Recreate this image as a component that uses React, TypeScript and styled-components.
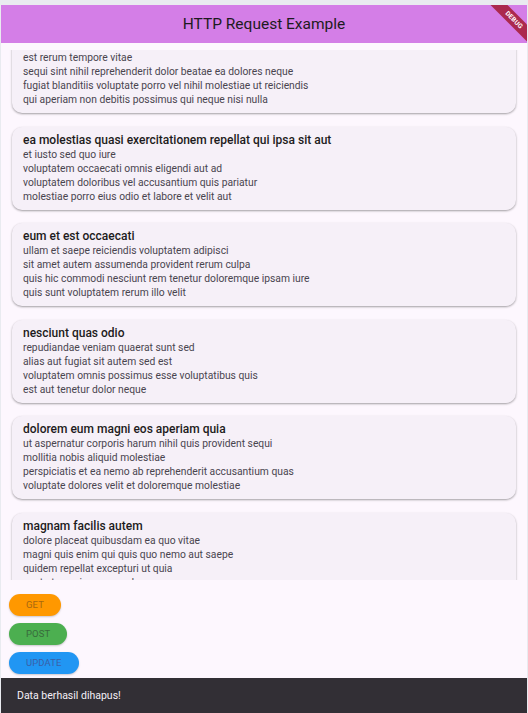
import { useEffect, useRef } from "react";
import styled, { createGlobalStyle } from "styled-components";

const GlobalStyle = createGlobalStyle`
  html, body {
    margin: 0;
    padding: 0;
    height: 100%;
    background: #e9ebf0;
  }
  #root {
    height: 100%;
  }
  * {
    box-sizing: border-box;
  }
`;

const Frame = styled.div`
  height: 100%;
  padding: 5px 1px 0 1px;
  display: flex;
  flex-direction: column;
  font-family: Roboto, "Noto Sans", sans-serif;
`;

const Screen = styled.div`
  flex: 1;
  min-height: 0;
  display: flex;
  flex-direction: column;
  background: #fdf7fe;
  overflow: hidden;
`;

const AppBar = styled.header`
  position: relative;
  height: 38px;
  flex-shrink: 0;
  background: #d47ee7;
  display: flex;
  align-items: center;
  justify-content: center;
  overflow: hidden;
  h1 {
    margin: 0;
    font-size: 15.5px;
    font-weight: 400;
    color: #1d1b20;
  }
`;

const DebugBanner = styled.div`
  position: absolute;
  top: 9px;
  right: -22px;
  width: 70px;
  height: 12px;
  background: rgba(160, 20, 40, 0.8);
  transform: rotate(45deg);
  color: #fff;
  font-size: 6.5px;
  font-weight: 700;
  letter-spacing: 0.2px;
  text-align: center;
  line-height: 12px;
`;

const ListArea = styled.div`
  flex: 1;
  min-height: 0;
  display: flex;
  flex-direction: column;
  padding-top: 7px;
`;

const PostList = styled.ul`
  flex: 1;
  min-height: 0;
  margin: 0;
  padding: 0 11px;
  list-style: none;
  overflow-y: auto;
  scrollbar-width: none;
  &::-webkit-scrollbar {
    display: none;
  }
  li {
    margin: 7px 0 13.5px;
    padding: 5px 12px 6px 11px;
    background: #f6f0f8;
    border-radius: 10px;
    box-shadow: 0 1px 2px rgba(0, 0, 0, 0.28), 0 1px 3px rgba(0, 0, 0, 0.1);
  }
`;

const PostTitle = styled.div`
  font-size: 12px;
  font-weight: 500;
  line-height: 16px;
  color: #1d1b20;
`;

const PostBody = styled.div`
  font-size: 10.3px;
  line-height: 14px;
  color: #49454f;
  white-space: pre-line;
`;

const Actions = styled.div`
  flex-shrink: 0;
  display: flex;
  flex-direction: column;
  align-items: flex-start;
  gap: 7px;
  padding: 14px 8px 4px;
`;

const ActionButton = styled.button<{ $bg: string; $fg: string }>`
  height: 22px;
  padding: 0 17px;
  border: none;
  border-radius: 11px;
  background: ${(p) => p.$bg};
  color: ${(p) => p.$fg};
  font-family: Roboto, sans-serif;
  font-size: 9.5px;
  line-height: 22px;
  font-weight: 400;
  letter-spacing: 0.1px;
  box-shadow: 0 1px 2px rgba(0, 0, 0, 0.2);
  cursor: pointer;
`;

const SnackBar = styled.div`
  flex-shrink: 0;
  height: 35px;
  padding: 0 16px;
  display: flex;
  align-items: center;
  background: #322f35;
  color: #f5eff7;
  font-size: 10.5px;
`;

interface Ipost {
  id: number;
  title: string;
  body: string;
}

const posts: Ipost[] = [
  {
    id: 2,
    title: "qui est esse",
    body: "est rerum tempore vitae\nsequi sint nihil reprehenderit dolor beatae ea dolores neque\nfugiat blanditiis voluptate porro vel nihil molestiae ut reiciendis\nqui aperiam non debitis possimus qui neque nisi nulla",
  },
  {
    id: 3,
    title: "ea molestias quasi exercitationem repellat qui ipsa sit aut",
    body: "et iusto sed quo iure\nvoluptatem occaecati omnis eligendi aut ad\nvoluptatem doloribus vel accusantium quis pariatur\nmolestiae porro eius odio et labore et velit aut",
  },
  {
    id: 4,
    title: "eum et est occaecati",
    body: "ullam et saepe reiciendis voluptatem adipisci\nsit amet autem assumenda provident rerum culpa\nquis hic commodi nesciunt rem tenetur doloremque ipsam iure\nquis sunt voluptatem rerum illo velit",
  },
  {
    id: 5,
    title: "nesciunt quas odio",
    body: "repudiandae veniam quaerat sunt sed\nalias aut fugiat sit autem sed est\nvoluptatem omnis possimus esse voluptatibus quis\nest aut tenetur dolor neque",
  },
  {
    id: 6,
    title: "dolorem eum magni eos aperiam quia",
    body: "ut aspernatur corporis harum nihil quis provident sequi\nmollitia nobis aliquid molestiae\nperspiciatis et ea nemo ab reprehenderit accusantium quas\nvoluptate dolores velit et doloremque molestiae",
  },
  {
    id: 7,
    title: "magnam facilis autem",
    body: "dolore placeat quibusdam ea quo vitae\nmagni quis enim qui quis quo nemo aut saepe\nquidem repellat excepturi ut quia\nsunt ut sequi eos ea sed quas",
  },
  {
    id: 8,
    title: "dolorem dolore est ipsam",
    body: "dignissimos aperiam dolorem qui eum\nfacilis quibusdam animi sint suscipit qui sint possimus cum\nquaerat magni maiores excepturi\nipsam ut commodi dolor voluptatum modi aut vitae",
  },
];

function App() {
  const listRef = useRef<HTMLUListElement>(null);

  // the list is shown scrolled down a little
  useEffect(() => {
    if (listRef.current) listRef.current.scrollTop = 27;
  }, []);

  return (
    <>
      <GlobalStyle />
      <Frame>
        <Screen>
          <AppBar>
            <h1>HTTP Request Example</h1>
            <DebugBanner>DEBUG</DebugBanner>
          </AppBar>
          <ListArea>
            <PostList ref={listRef}>
              {posts.map((post) => (
                <li key={post.id}>
                  <PostTitle>{post.title}</PostTitle>
                  <PostBody>{post.body}</PostBody>
                </li>
              ))}
            </PostList>
          </ListArea>
          <Actions>
            <ActionButton $bg="#ff9800" $fg="#a8680f">GET</ActionButton>
            <ActionButton $bg="#4caf50" $fg="#386b3c">POST</ActionButton>
            <ActionButton $bg="#2196f3" $fg="#3a5fa6">UPDATE</ActionButton>
          </Actions>
          <SnackBar>Data berhasil dihapus!</SnackBar>
        </Screen>
      </Frame>
    </>
  );
}

export default App;
